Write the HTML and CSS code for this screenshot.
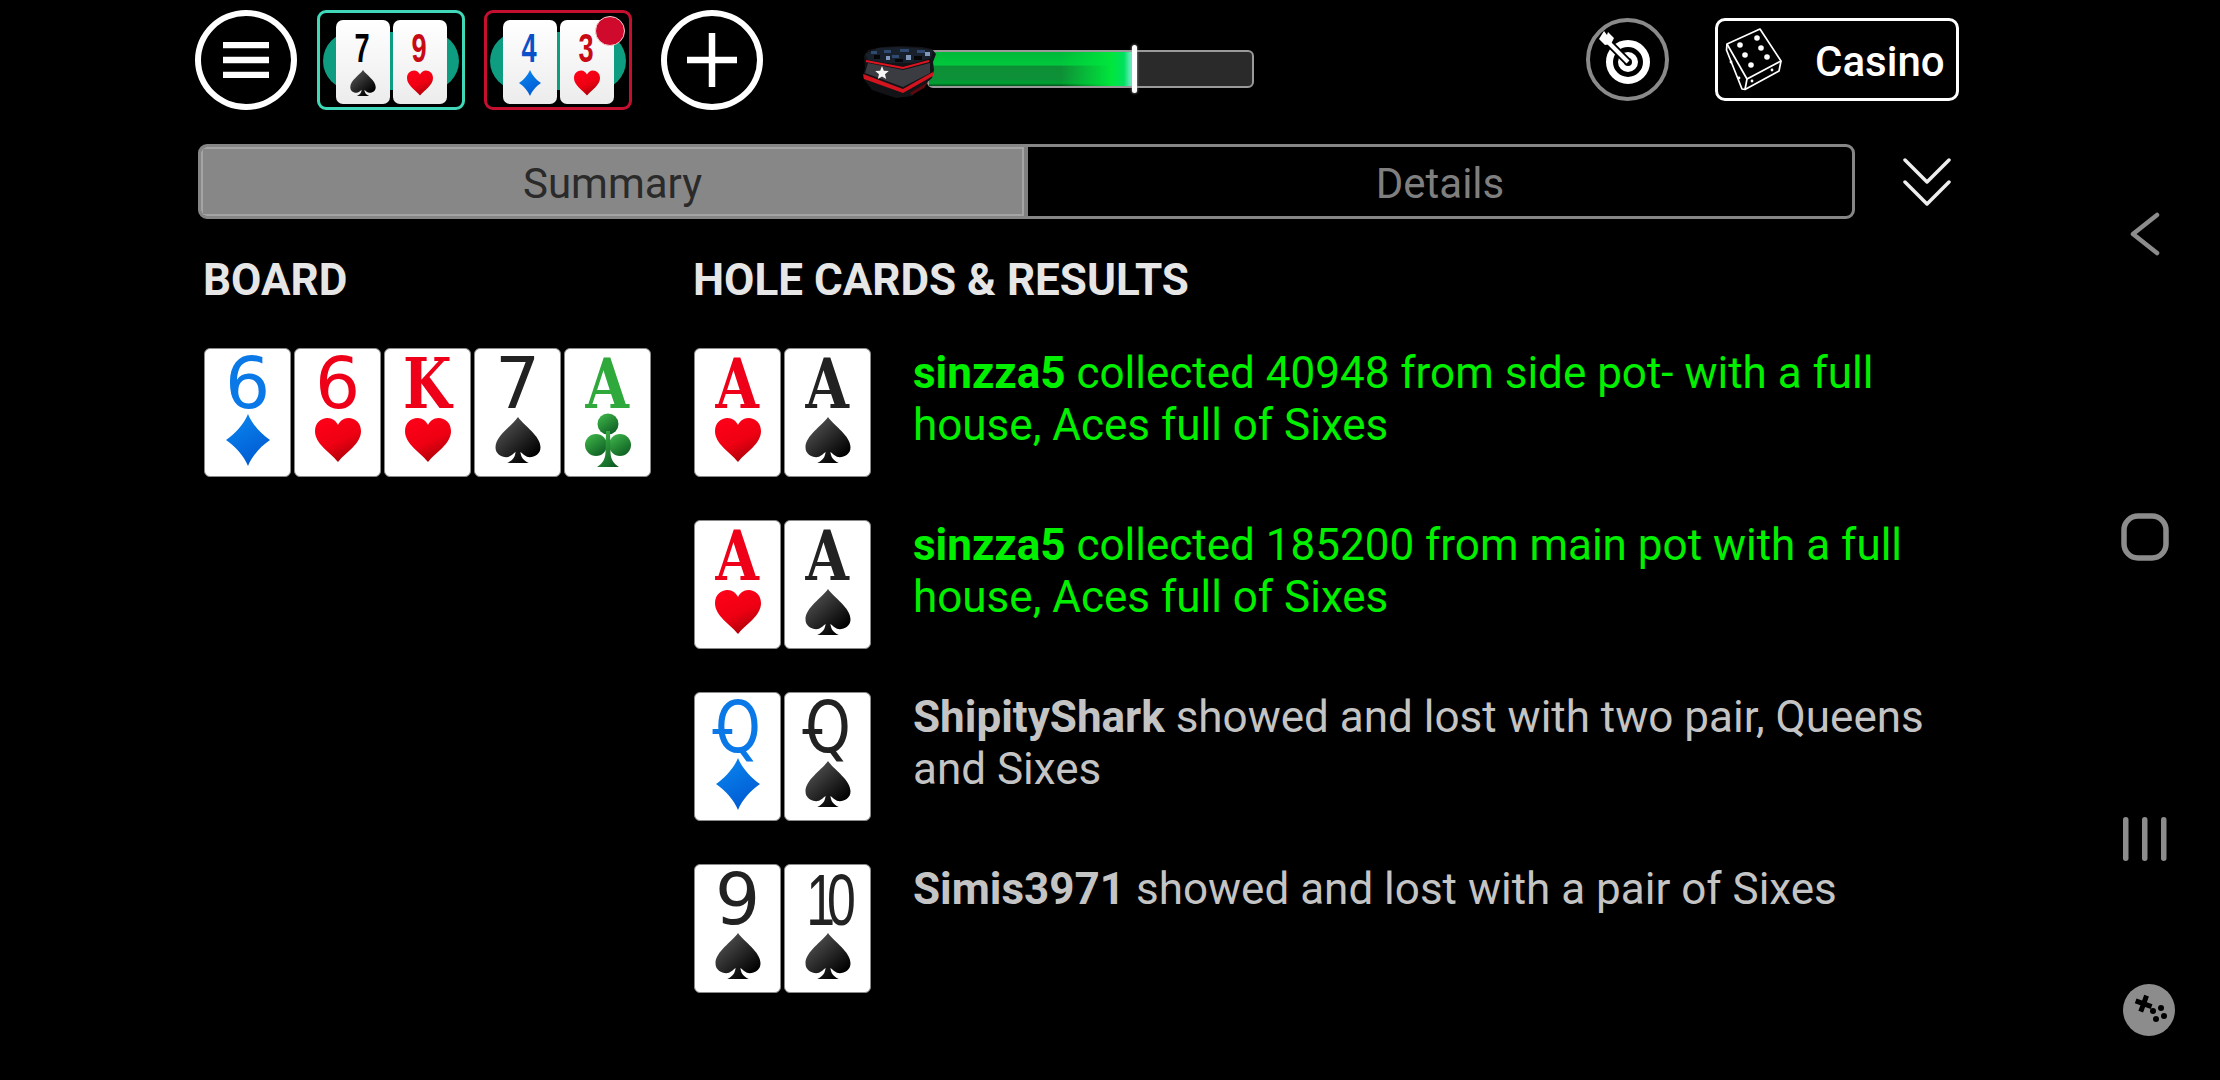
FILE: index.html
```html
<!DOCTYPE html>
<html lang="en">
<head>
<meta charset="utf-8">
<title>Hand summary</title>
<link rel="stylesheet" href="styles.css">
</head>
<body>
<svg class="defs" width="0" height="0" aria-hidden="true">
  <defs>
    <linearGradient id="gh" x1="0.2" y1="0" x2="0.7" y2="1"><stop offset="0" stop-color="#ff0018"/><stop offset="0.55" stop-color="#ee0012"/><stop offset="1" stop-color="#a80008"/></linearGradient>
    <linearGradient id="gd" x1="0.2" y1="0" x2="0.7" y2="1"><stop offset="0" stop-color="#0a86f0"/><stop offset="1" stop-color="#0058d0"/></linearGradient>
    <linearGradient id="gs" x1="0.1" y1="0.1" x2="0.8" y2="0.9"><stop offset="0" stop-color="#555"/><stop offset="1" stop-color="#000"/></linearGradient>
    <linearGradient id="gc" x1="0.1" y1="0" x2="0.8" y2="1"><stop offset="0" stop-color="#3fb84a"/><stop offset="1" stop-color="#0d5c22"/></linearGradient>
    <symbol id="heart" viewBox="0 0 46 44"><path fill="url(#gh)" d="M23 44C15 34 0 26 0 13 0 5 6 0 12.500 0 17.500 0 21 3 23 7 25 3 28.500 0 33.500 0 40 0 46 5 46 13 46 26 31 34 23 44Z"/></symbol>
    <symbol id="diamond" viewBox="0 0 44 52"><path fill="url(#gd)" d="M22 0C26 10 35 20 44 26 35 32 26 42 22 52 18 42 9 32 0 26 9 20 18 10 22 0Z"/></symbol>
    <symbol id="spade" viewBox="0 0 46 47"><path fill="url(#gs)" d="M23 0C29 9 46 19 46 31 46 38 40 41 35 41 31 41 28 38 25.500 35.500 26 41 28 44 34 47H12C18 44 20 41 20.500 35.500 18 38 15 41 11 41 6 41 0 38 0 31 0 19 17 9 23 0Z"/></symbol>
    <symbol id="club" viewBox="0 0 46 54"><g fill="url(#gc)"><circle cx="23" cy="11" r="10.500"/><circle cx="11" cy="32" r="11"/><circle cx="35" cy="32" r="11"/><path d="M21 18H25L25.500 40C26 47 29 51 34 54H12C17 51 20 47 20.500 40Z"/></g></symbol>
  </defs>
</svg>
<div class="screen">
  <main class="app">
    <header class="topbar">
      <button class="round-btn" aria-label="Menu">
        <svg class="ic-menu" viewBox="0 0 46 36"><path d="M0 3H46M0 18H46M0 33H46" stroke="#fff" stroke-width="6.500" fill="none"/></svg>
      </button>
      <div class="table table-teal">
        <span class="felt"></span>
        <div class="mini black"><span class="mini-rank">7</span><svg class="mini-suit"><use href="#spade"/></svg></div>
        <div class="mini red"><span class="mini-rank">9</span><svg class="mini-suit"><use href="#heart"/></svg></div>
      </div>
      <div class="table table-red">
        <span class="felt"></span>
        <div class="mini blue"><span class="mini-rank">4</span><svg class="mini-suit"><use href="#diamond"/></svg></div>
        <div class="mini red"><span class="mini-rank">3</span><svg class="mini-suit"><use href="#heart"/></svg></div>
        <span class="dot"></span>
      </div>
      <button class="round-btn plus" aria-label="Add table">
        <svg class="ic-plus" viewBox="0 0 50 54"><path d="M0 27H50M25 0V54" stroke="#fff" stroke-width="6.500" fill="none"/></svg>
      </button>
      <div class="progress">
        <div class="track"><div class="fill"></div><span class="thumb"></span></div>
        <svg class="chest" viewBox="0 0 74 52">
          <path d="M2 10 6 4 20 1 40 0 60 1 70 3 74 8 71 16 72 24 70 32 50 50 34 52 10 44 1 32 3 22Z" fill="#121316"/>
          <path d="M3 8 16 2 36 1 56 2 71 4 69 12 52 17 24 17 6 14Z" fill="#18202c"/>
          <path d="M9 5h6v3h-6zM22 4h7v3h-7zM38 3h9v3h-9zM55 4h8v3h-8zM30 9h7v3h-7z" fill="#2e4a70"/>
          <path d="M44 9h5v5h-5zM24 10h4v4h-4zM63 6h5v4h-5z" fill="#7f97b8"/>
          <path d="M12 9h6v4h-6zM33 13h8v3h-8zM52 10h8v4h-8z" fill="#050608"/>
          <path d="M6 17 41 24 68 17 68 27 41 41 3 27Z" fill="#3a3c42"/>
          <path d="M4 15 41 22 67 15" stroke="#dc1420" stroke-width="2" fill="none"/>
          <path d="M1 28 41 43 71 26 71 30 41 47 2 33Z" fill="#d2141e"/>
          <path d="M48 47 66 36 62 42 50 49Z" fill="#5c0a10"/>
          <path d="M20 20 21.800 24.700 26.800 25 23 28.200 24.200 33 20 30.400 15.800 33 17 28.200 13.200 25 18.200 24.700Z" fill="#f6f6f6"/>
        </svg>
      </div>
      <button class="target" aria-label="Missions">
        <svg viewBox="0 0 58 58" class="ic-target">
          <circle cx="29" cy="31" r="18.500" fill="none" stroke="#fff" stroke-width="7"/>
          <circle cx="29" cy="31" r="7" fill="none" stroke="#fff" stroke-width="6"/>
          <path d="M9 11 29 31" stroke="#000" stroke-width="8"/>
          <path d="M7 9 29 31" stroke="#fff" stroke-width="4"/>
          <path d="M0 8 5 0 8 4 9 1 15 7 12 13 6 14Z" fill="#fff"/>
        </svg>
      </button>
      <button class="casino">
        <svg viewBox="0 0 58 63" class="ic-dice" fill="none" stroke="#fff" stroke-width="1.700" stroke-linejoin="round">
          <path d="M2 16 35 1 56 33 22 51Z"/>
          <path d="M2 16 1.500 22 17 61 20 61.500 54 43 56 33"/>
          <path d="M22 51 20 61.500"/>
          <g fill="#fff" stroke="none">
            <circle cx="15" cy="17" r="2.800"/><circle cx="32" cy="10" r="2.800"/>
            <circle cx="20" cy="27" r="2.800"/><circle cx="36" cy="20" r="2.800"/>
            <circle cx="26" cy="37" r="2.800"/><circle cx="42" cy="29" r="2.800"/>
            <circle cx="6" cy="34" r="1.400"/><circle cx="14" cy="50" r="1.400"/>
            <circle cx="27" cy="53" r="1.400"/><circle cx="47" cy="42" r="1.400"/>
          </g>
        </svg>
        <span>Casino</span>
      </button>
    </header>

    <div class="tabs-row">
      <div class="tabs">
        <div class="tab tab-on">Summary</div>
        <div class="tab">Details</div>
      </div>
      <svg class="collapse" viewBox="0 0 48 48" fill="none" stroke="#eee" stroke-width="3.500" stroke-linecap="round" stroke-linejoin="round"><path d="M2 2 24 24 46 2M2 24 24 46 46 24"/></svg>
    </div>

    <div class="columns">
      <section class="board">
        <h2>BOARD</h2>
        <div class="cards">
          <div class="card blue"><span class="rank sans">6</span><svg class="suit diamond"><use href="#diamond"/></svg></div>
          <div class="card red"><span class="rank sans">6</span><svg class="suit"><use href="#heart"/></svg></div>
          <div class="card red"><span class="rank slab">K</span><svg class="suit"><use href="#heart"/></svg></div>
          <div class="card black"><span class="rank sans">7</span><svg class="suit"><use href="#spade"/></svg></div>
          <div class="card green"><span class="rank slab">A</span><svg class="suit club"><use href="#club"/></svg></div>
        </div>
      </section>
      <section class="results">
        <h2>HOLE CARDS &amp; RESULTS</h2>
        <div class="result">
          <div class="cards">
            <div class="card red"><span class="rank slab">A</span><svg class="suit"><use href="#heart"/></svg></div>
            <div class="card black"><span class="rank slab">A</span><svg class="suit"><use href="#spade"/></svg></div>
          </div>
          <p class="win"><b>sinzza5</b> collected 40948 from side pot- with a full house, Aces full of Sixes</p>
        </div>
        <div class="result">
          <div class="cards">
            <div class="card red"><span class="rank slab">A</span><svg class="suit"><use href="#heart"/></svg></div>
            <div class="card black"><span class="rank slab">A</span><svg class="suit"><use href="#spade"/></svg></div>
          </div>
          <p class="win"><b>sinzza5</b> collected 185200 from main pot with a full house, Aces full of Sixes</p>
        </div>
        <div class="result">
          <div class="cards">
            <div class="card blue"><span class="rank sans queen">Q</span><svg class="suit diamond"><use href="#diamond"/></svg></div>
            <div class="card black"><span class="rank sans queen">Q</span><svg class="suit"><use href="#spade"/></svg></div>
          </div>
          <p class="lose"><b>ShipityShark</b> showed and lost with two pair, Queens and Sixes</p>
        </div>
        <div class="result">
          <div class="cards">
            <div class="card black"><span class="rank sans">9</span><svg class="suit"><use href="#spade"/></svg></div>
            <div class="card black"><span class="rank ten">10</span><svg class="suit"><use href="#spade"/></svg></div>
          </div>
          <p class="lose"><b>Simis3971</b> showed and lost with a pair of Sixes</p>
        </div>
      </section>
    </div>
  </main>

  <nav class="sysnav">
    <svg class="nav-back" viewBox="0 0 30 44" fill="none" stroke="#8c8c8c" stroke-width="4.500" stroke-linecap="round" stroke-linejoin="round"><path d="M27 3 3 22 27 41"/></svg>
    <svg class="nav-home" viewBox="0 0 48 48" fill="none" stroke="#8c8c8c" stroke-width="5.500"><rect x="3" y="3" width="42" height="42" rx="14"/></svg>
    <svg class="nav-recent" viewBox="0 0 44 44" fill="#8c8c8c"><rect x="0" y="0" width="5.500" height="44" rx="2.700"/><rect x="19" y="0" width="5.500" height="44" rx="2.700"/><rect x="38" y="0" width="5.500" height="44" rx="2.700"/></svg>
    <svg class="nav-game" viewBox="0 0 52 52"><circle cx="26" cy="26" r="26" fill="#8c8c8c"/><path d="M12 17h6v-6h5v6h6v5h-6v6h-5v-6h-6Z" fill="#000" transform="rotate(20 20 20)"/><g fill="#000"><circle cx="30" cy="27" r="3"/><circle cx="38" cy="24" r="3"/><circle cx="33" cy="35" r="3"/><circle cx="41" cy="32" r="3"/></g></svg>
  </nav>
</div>
</body>
</html>
```
FILE: styles.css
```css
* { box-sizing: border-box; }
html, body { margin: 0; height: 100%; background: #000; }
body { font-family: Roboto, "Liberation Sans", sans-serif; color: #e6e6e6; overflow: hidden; }
.defs { position: absolute; }
h2, p { margin: 0; }
button { padding: 0; background: none; font: inherit; color: inherit; }

.screen { display: flex; width: 2220px; height: 1080px; }
.app { width: 2100px; padding-left: 195px; flex: none; }

/* top bar */
.topbar { display: flex; align-items: flex-start; height: 110px; padding-top: 10px; }
.round-btn { width: 102px; height: 100px; border: 6px solid #fff; border-radius: 50%; display: flex; align-items: center; justify-content: center; flex: none; }
.ic-menu { width: 46px; height: 36px; }
.ic-plus { width: 50px; height: 54px; }
.plus { margin-left: 29px; }

.table { position: relative; width: 148px; height: 100px; margin-left: 20px; border: 3px solid; border-radius: 9px; display: flex; justify-content: center; gap: 3px; padding-top: 7px; flex: none; }
.table-teal { border-color: #40d8b8; }
.table-red { border-color: #c40f2e; margin-left: 19px; }
.felt { position: absolute; left: 3px; right: 3px; top: 19px; height: 58px; background: #0f9d82; border-radius: 29px / 29px; }
.mini { position: relative; width: 54px; height: 84px; background: linear-gradient(#fff, #ececec); border-radius: 7px; display: flex; flex-direction: column; align-items: center; }
.mini-rank { font-family: "Liberation Sans", sans-serif; font-weight: 700; font-size: 40px; line-height: 34px; margin-top: 11px; transform: scaleX(.68); }
.mini-suit { width: 26px; height: 26px; margin-top: 5px; }
.mini.red { color: #c80a14; }
.mini.blue { color: #0a50c8; }
.mini.black { color: #000; }
.dot { position: absolute; right: 4px; top: 3px; width: 30px; height: 30px; background: #cf0a2c; border: 1px solid #f0d0d4; border-radius: 50%; }

.progress { position: relative; width: 392px; height: 60px; margin-left: 99px; margin-top: 30px; flex: none; }
.chest { position: absolute; left: 0; top: 6px; width: 74px; height: 52px; }
.track { position: absolute; left: 65px; top: 10px; width: 327px; height: 38px; background: #2a2a2a; border: 2px solid #9a9a9a; border-radius: 6px; }
.fill { height: 100%; width: 63%; background: linear-gradient(90deg, rgba(0,230,60,0) 0, rgba(0,230,60,0) 65%, #00e63c 90%, #00e060 96%, #7af0d0 100%), linear-gradient(#00b83a 0, #00c83c 38%, #0c8f34 42%, #0e9038 78%, #00a030 92%, #064d1c 100%); }
.thumb { position: absolute; left: 203px; top: -7px; width: 5px; height: 48px; background: #fff; border-radius: 3px; box-shadow: 0 0 3px #aaa; }

.target { width: 83px; height: 83px; margin-left: auto; margin-top: 8px; border: 4px solid #8a8a8a; border-radius: 50%; display: flex; align-items: center; justify-content: center; flex: none; }
.ic-target { width: 58px; height: 58px; }
.casino { width: 244px; height: 83px; margin-left: 46px; margin-top: 8px; margin-right: 141px; border: 3px solid #fff; border-radius: 10px; display: flex; align-items: center; padding-left: 7px; flex: none; font-size: 42px; font-weight: 500; color: #fff; }
.ic-dice { width: 58px; height: 63px; flex: none; }
.casino span { margin-left: 32px; padding-top: 4px; }

/* tabs */
.tabs-row { display: flex; align-items: center; margin-top: 34px; margin-left: 3px; }
.tabs { display: flex; width: 1657px; height: 75px; border: 3px solid #868686; border-radius: 9px; overflow: hidden; flex: none; }
.tab { flex: 1; display: flex; align-items: center; justify-content: center; font-size: 42px; color: #7f7f7f; padding-top: 3px; }
.tab-on { background: #878787; color: #2a2a2a; border-right: 4px solid #808080; box-shadow: inset 0 0 0 2px #a4a4a4; flex: none; width: 827px; }
.collapse { width: 48px; height: 48px; margin-left: 48px; flex: none; }

/* columns */
.columns { display: flex; margin-top: 36px; margin-left: 9px; }
h2 { font-size: 44px; font-weight: 700; line-height: 50px; color: #e6e6e6; margin-left: -1px; }
.board { width: 490px; flex: none; }
.results { flex: 1; min-width: 0; }
.cards { display: flex; gap: 3px; flex: none; }
.board .cards { margin-top: 43px; }
.card { position: relative; width: 87px; height: 129px; background: #fff; border: 1.500px solid #8a8a8a; border-radius: 6px; display: flex; flex-direction: column; align-items: center; }
.red { color: #ee0018; }
.blue { color: #0a78e6; }
.black { color: #222; }
.green { color: #2fa83c; }
.rank { position: relative; height: 60px; line-height: 60px; margin-top: 5px; }
.sans { font-family: "DejaVu Sans", sans-serif; font-size: 71px; }
.slab { font-family: "DejaVu Serif", serif; font-weight: 700; font-size: 70px; transform: scaleX(.8); }
.queen { transform: scaleX(.82); }
.queen::before { content: ""; position: absolute; left: -3px; top: 31px; width: 24px; height: 5px; background: currentColor; }
.ten { font-family: "Liberation Sans", sans-serif; font-size: 72px; letter-spacing: -11px; transform: scaleX(.72); }
.suit { width: 46px; height: 46px; margin-top: 3px; }
.suit.diamond { height: 52px; margin-top: 0; }
.suit.club { height: 54px; margin-top: -1px; }

.result { display: flex; margin-bottom: 43px; }
.results h2 + .result { margin-top: 43px; }
.result p { width: 1050px; margin-left: 42px; margin-top: -1px; font-size: 44px; line-height: 52px; }
.win { color: #00f000; }
.lose { color: #c4c4c4; }

/* system nav */
.sysnav { flex: 1; position: relative; display: flex; flex-direction: column; align-items: flex-start; padding-top: 212px; padding-left: 23px; }
.nav-back { width: 30px; height: 44px; margin-left: 7px; }
.nav-home { width: 48px; height: 48px; margin-top: 257px; margin-left: -2px; }
.nav-recent { width: 44px; height: 44px; margin-top: 256px; margin-left: 0; }
.nav-game { width: 52px; height: 52px; margin-top: 123px; }
```
